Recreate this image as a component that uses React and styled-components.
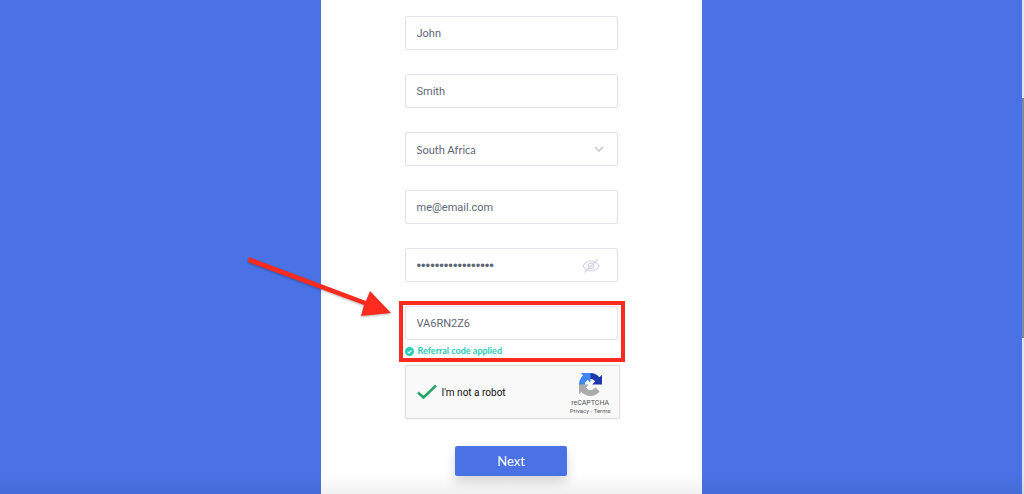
import { useState } from "react";
import styled, { createGlobalStyle } from "styled-components";

const App = () => {
  const [values, setValues] = useState({
    firstName: "John",
    lastName: "Smith",
    country: "South Africa",
    email: "me@email.com",
    password: "mysecretpassword1",
    code: "VA6RN2Z6",
  });
  const [robot, setRobot] = useState(true);

  const onChange = (e) => {
    setValues({ ...values, [e.target.name]: e.target.value });
  };

  return (
    <>
      <GlobalStyle />
      <Page>
        <Panel>
          <Form onSubmit={(e) => e.preventDefault()}>
            <Input aria-label="First name" name="firstName" value={values.firstName} onChange={onChange} />
            <Input aria-label="Last name" name="lastName" value={values.lastName} onChange={onChange} />
            <Field>
              <Select aria-label="Country" name="country" value={values.country} onChange={onChange}>
                <option>South Africa</option>
              </Select>
              <Chevron viewBox="0 0 10 6" aria-hidden="true">
                <path d="M1 1l4 4 4-4" />
              </Chevron>
            </Field>
            <Input aria-label="Email" type="email" name="email" value={values.email} onChange={onChange} />
            <Field>
              <PasswordInput aria-label="Password" name="password" value={values.password} onChange={onChange} />
              <EyeButton type="button" aria-label="Show password">
                <svg viewBox="0 0 18 14" width="18" height="14">
                  <path d="M1 7c2-3.300 4.800-5 8-5s6 1.700 8 5c-2 3.300-4.800 5-8 5s-6-1.700-8-5z" />
                  <circle cx="9" cy="7" r="2.800" />
                  <path d="M2.500 13.500L15.500.5" />
                </svg>
              </EyeButton>
            </Field>
            <CodeGroup>
              <Input aria-label="Referral code" name="code" value={values.code} onChange={onChange} />
              <Applied>
                <svg viewBox="0 0 10 10" width="9" height="9" aria-hidden="true">
                  <circle cx="5" cy="5" r="5" fill="#27cdb5" />
                  <path d="M2.800 5.200l1.600 1.500 2.900-3" fill="none" stroke="#fff" strokeWidth="1.300" />
                </svg>
                Referral code applied
              </Applied>
              <Highlight />
              <Arrow viewBox="0 0 150 66" aria-hidden="true">
                <path d="M4 4L121 48 125 38 146 60 116 63 119 52 3 9z" />
              </Arrow>
            </CodeGroup>
            <Captcha>
              <RobotLabel>
                <Tick type="checkbox" checked={robot} onChange={() => setRobot(!robot)} />
                <TickMark viewBox="0 0 20 16" aria-hidden="true">
                  {robot && <path d="M1 8.500l5.500 5L19 1.500" />}
                </TickMark>
                I'm not a robot
              </RobotLabel>
              <Brand>
                <svg viewBox="0 0 64 64" width="23" height="23" aria-hidden="true">
                  <path fill="#1c3aa9" d="M64 31.955l-.033-1.370V4.687l-7.160 7.160C50.948 4.674 42.033.093 32.050.093c-10.400 0-19.622 4.960-25.458 12.640l11.736 11.860a15.550 15.550 0 0 1 4.754-5.334c2.050-1.600 4.952-2.906 8.968-2.906.485 0 .860.057 1.135.163 4.976.393 9.288 3.140 11.828 7.124l-8.307 8.307L64 31.953" />
                  <path fill="#4285f4" d="M31.862.094l-1.370.033H4.594l7.160 7.160C4.580 13.147 0 22.060 0 32.046c0 10.400 4.960 19.622 12.640 25.458L24.500 45.768a15.550 15.550 0 0 1-5.334-4.754c-1.600-2.050-2.906-4.952-2.906-8.968 0-.485.057-.860.163-1.135.393-4.976 3.140-9.288 7.124-11.828l8.307 8.307L31.860.095" />
                  <path fill="#ababab" d="M.001 32.045l.033 1.370v25.898l7.160-7.160c5.860 7.173 14.774 11.754 24.760 11.754 10.400 0 19.622-4.960 25.458-12.640l-11.736-11.860a15.550 15.550 0 0 1-4.754 5.334c-2.050 1.600-4.952 2.906-8.968 2.906-.485 0-.860-.057-1.135-.163-4.976-.393-9.288-3.140-11.828-7.124l8.307-8.307L0 32.047" />
                </svg>
                <BrandName>reCAPTCHA</BrandName>
                <Legal>
                  <a href="#privacy">Privacy</a> - <a href="#terms">Terms</a>
                </Legal>
              </Brand>
            </Captcha>
            <NextButton type="submit">Next</NextButton>
          </Form>
        </Panel>
        <ScrollTrack>
          <ScrollThumb />
        </ScrollTrack>
        <BottomShade />
      </Page>
    </>
  );
};

export default App;

const GlobalStyle = createGlobalStyle`
  * {
    box-sizing: border-box;
  }
  body {
    margin: 0;
    font-family: Roboto, "Liberation Sans", sans-serif;
  }
`;

const Page = styled.div`
  position: relative;
  display: grid;
  grid-template-columns: 1fr 2px;
  min-height: 100vh;
  background-color: #4a72e4;
  overflow: hidden;
`;

const Panel = styled.main`
  width: 100%;
  max-width: 381px;
  margin: 0 auto;
  padding: 16px 84px;
  background-color: #fff;
`;

const Form = styled.form`
  display: flex;
  flex-direction: column;
  gap: 24px;
`;

const Field = styled.div`
  position: relative;
`;

const Input = styled.input`
  display: block;
  width: 100%;
  height: 34px;
  padding: 0 11px;
  border: 1px solid #dfe1ee;
  border-radius: 2px;
  background-color: #fff;
  color: #5d6675;
  font-family: Roboto, "Liberation Sans", sans-serif;
  font-size: 11px;
  outline: none;
`;

const PasswordInput = styled(Input).attrs({ type: "password" })`
  font-family: "Liberation Sans", sans-serif;
  font-size: 13px;
`;

const Select = styled(Input).attrs({ as: "select" })`
  appearance: none;
  font-family: Lato, sans-serif;
`;

//아이콘은 필드 오른쪽 위에 겹쳐서 표시
const Chevron = styled.svg`
  position: absolute;
  top: 14px;
  right: 14px;
  width: 10px;
  height: 6px;
  fill: none;
  stroke: #c3c5cc;
  stroke-width: 1.5;
  pointer-events: none;
`;

const EyeButton = styled.button`
  position: absolute;
  top: 11px;
  right: 18px;
  display: flex;
  padding: 0;
  border: 0;
  background: none;

  svg {
    fill: none;
    stroke: #d3d5e6;
    stroke-width: 1.2;
  }
`;

const CodeGroup = styled.div`
  position: relative;
`;

const Applied = styled.p`
  display: flex;
  align-items: center;
  gap: 4px;
  margin: 5px 0 0;
  color: #27cdb5;
  font-family: Lato, sans-serif;
  font-size: 9px;
  font-weight: 700;
  line-height: 12px;
`;

const Highlight = styled.div`
  position: absolute;
  inset: -5px -7px -5px -6px;
  border: 4px solid #fb2b1f;
  pointer-events: none;
`;

const Arrow = styled.svg`
  position: absolute;
  top: -53px;
  right: 223px;
  width: 150px;
  height: 66px;
  fill: #fb2b1f;
  filter: drop-shadow(0 1px 1px rgba(0, 0, 0, 0.3));
  pointer-events: none;
`;

const Captcha = styled.div`
  display: flex;
  align-items: center;
  justify-content: space-between;
  height: 54px;
  margin: -16px -2px 0 0;
  padding: 0 8px 0 11px;
  border: 1px solid #dcdcde;
  border-radius: 2px;
  background-color: #f9f9f9;
  box-shadow: 0 0 2px rgba(0, 0, 0, 0.1);
`;

const RobotLabel = styled.label`
  position: relative;
  display: flex;
  align-items: center;
  gap: 5px;
  color: #111;
  font-size: 10px;
`;

const Tick = styled.input`
  appearance: none;
  width: 20px;
  height: 16px;
  margin: 0;
`;

const TickMark = styled.svg`
  position: absolute;
  left: 0;
  width: 20px;
  height: 16px;
  fill: none;
  stroke: #22a565;
  stroke-width: 2.5;
  pointer-events: none;
`;

const Brand = styled.div`
  display: flex;
  flex-direction: column;
  align-items: center;
  padding-top: 4px;
  color: #555;
`;

const BrandName = styled.span`
  margin-top: 3px;
  font-size: 7px;
  line-height: 8px;
`;

const Legal = styled.span`
  font-size: 6px;
  line-height: 8px;

  a {
    color: inherit;
    text-decoration: none;
  }
`;

const NextButton = styled.button`
  align-self: center;
  width: 112px;
  height: 30px;
  margin-top: 3px;
  border: 0;
  border-radius: 2px;
  background-color: #4a72e4;
  box-shadow: 0 6px 12px rgba(0, 0, 0, 0.16);
  color: #fff;
  font-family: Lato, sans-serif;
  font-size: 13px;
`;

const ScrollTrack = styled.div`
  padding-top: 98px;
  background-color: #dfe5f8;
`;

const ScrollThumb = styled.div`
  height: 240px;
  background-color: #8088a8;
`;

const BottomShade = styled.div`
  position: absolute;
  right: 0;
  bottom: 0;
  left: 0;
  height: 20px;
  background: linear-gradient(transparent, rgba(0, 0, 0, 0.06));
  pointer-events: none;
`;
